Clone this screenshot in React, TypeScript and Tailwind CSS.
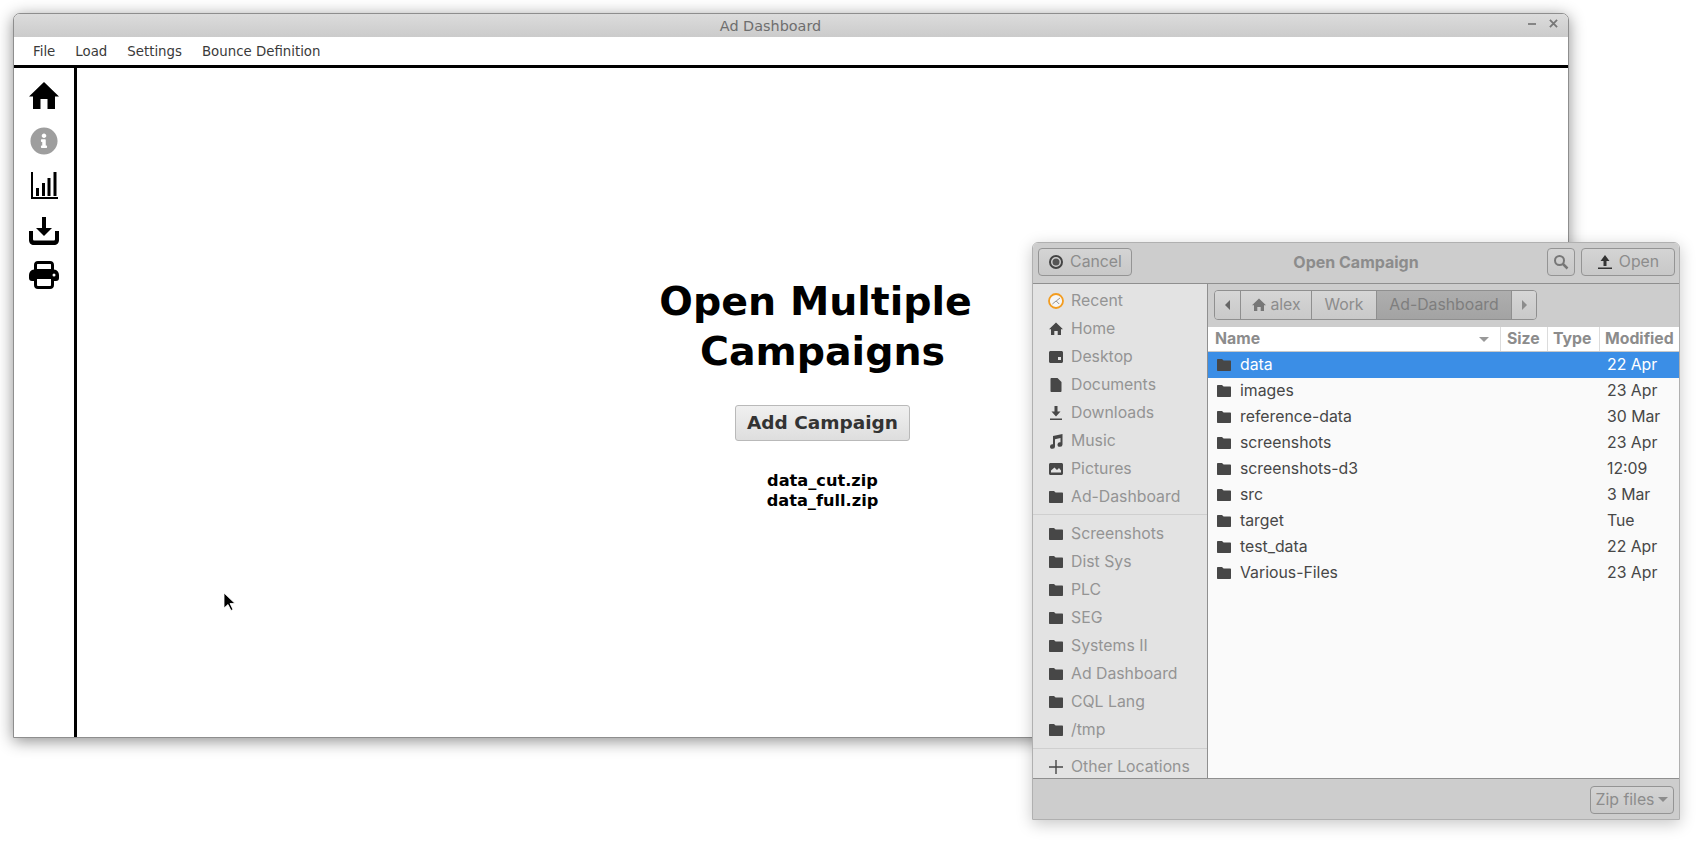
import type { ReactNode } from "react";
import { FaInfoCircle } from "react-icons/fa";

const DEJAVU = "font-['DejaVu_Sans',sans-serif]";
const INTER = "font-['Inter',sans-serif]";

const MENUS = ["File", "Load", "Settings", "Bounce Definition"];

const FOLDER = "M1 3C1 2.400 1.400 2 2 2H6l1.600 1.500H14c.6 0 1 .4 1 1V13c0 .6-.4 1-1 1H2c-.6 0-1-.4-1-1z";

function Folder({ className = "" }: { className?: string }) {
  return (
    <svg viewBox="0 0 16 16" className={"w-4 h-4 shrink-0 " + className} fill="#474747">
      <path d={FOLDER} />
    </svg>
  );
}

const PLACES: { label: string; icon: ReactNode }[] = [
  {
    label: "Recent",
    icon: (
      <svg viewBox="0 0 16 16" className="w-4 h-4 shrink-0">
        <circle cx="8" cy="8" r="7" fill="#f6f6f6" stroke="#f39c1f" strokeWidth="1.800" />
        <path d="M8.200 8L12 5M8 8l-3.600 3M8.200 8l3 3" stroke="#777" strokeWidth="0.800" fill="none" />
      </svg>
    ),
  },
  {
    label: "Home",
    icon: (
      <svg viewBox="0 0 16 16" className="w-4 h-4 shrink-0" fill="#474747">
        <path d="M8 1.500L15 8.300h-2V14H9.700v-4H6.300v4H3V8.300H1z" />
      </svg>
    ),
  },
  {
    label: "Desktop",
    icon: (
      <svg viewBox="0 0 16 16" className="w-4 h-4 shrink-0" fill="#474747">
        <path fillRule="evenodd" d="M1 3.500C1 2.700 1.700 2 2.500 2h11c.8 0 1.500.7 1.500 1.500v9c0 .8-.7 1.500-1.500 1.500h-11C1.700 14 1 13.300 1 12.500zM10 8v3h3V8z" />
      </svg>
    ),
  },
  {
    label: "Documents",
    icon: (
      <svg viewBox="0 0 16 16" className="w-4 h-4 shrink-0" fill="#474747">
        <path d="M2.500 2C2.500 1.400 3 1 3.500 1H9.500l4 4v9c0 .6-.5 1-1 1h-9c-.5 0-1-.4-1-1z" />
      </svg>
    ),
  },
  {
    label: "Downloads",
    icon: (
      <svg viewBox="0 0 16 16" className="w-4 h-4 shrink-0" fill="#474747">
        <path d="M6.500 1h3v5.500h3L8 11.500 3.500 6.500h3zM2 13.500h12V15H2z" />
      </svg>
    ),
  },
  {
    label: "Music",
    icon: (
      <svg viewBox="0 0 16 16" className="w-4 h-4 shrink-0" fill="#474747">
        <path d="M5 3l9.500-2v10.500a2.500 2.300 0 1 1-2-2.200V5L7 6.200v7.300A2.500 2.300 0 1 1 5 11.300z" />
      </svg>
    ),
  },
  {
    label: "Pictures",
    icon: (
      <svg viewBox="0 0 16 16" className="w-4 h-4 shrink-0" fill="#474747">
        <path fillRule="evenodd" d="M1 3.500C1 2.700 1.700 2 2.500 2h11c.8 0 1.500.7 1.500 1.500v9c0 .8-.7 1.500-1.500 1.500h-11C1.700 14 1 13.300 1 12.500zM3 11.500h10V9.500L11 7 9 9 6.500 6.500 3 9.500z" />
      </svg>
    ),
  },
  { label: "Ad-Dashboard", icon: <Folder /> },
];

const BOOKMARKS = ["Screenshots", "Dist Sys", "PLC", "SEG", "Systems II", "Ad Dashboard", "CQL Lang", "/tmp"];

const FILES: [string, string][] = [
  ["data", "22 Apr"],
  ["images", "23 Apr"],
  ["reference-data", "30 Mar"],
  ["screenshots", "23 Apr"],
  ["screenshots-d3", "12:09"],
  ["src", "3 Mar"],
  ["target", "Tue"],
  ["test_data", "22 Apr"],
  ["Various-Files", "23 Apr"],
];

function Place({ label, icon }: { label: string; icon: ReactNode }) {
  return (
    <div className="h-[28px] flex items-center pl-[15px] gap-[7px] text-[15.8px] text-[#949494]">
      {icon}
      <span>{label}</span>
    </div>
  );
}

function Sidebar() {
  return (
    <div className="w-[175px] shrink-0 bg-[#e3e3e3] border-r border-[#8f8f8f] pt-[3px] overflow-hidden">
      {PLACES.map((p) => (
        <Place key={p.label} label={p.label} icon={p.icon} />
      ))}
      <div className="h-px bg-[#cfcfcf] mt-[3px] mb-[5px]" />
      {BOOKMARKS.map((b) => (
        <Place key={b} label={b} icon={<Folder />} />
      ))}
      <div className="h-px bg-[#cfcfcf] mt-[4px] mb-[4px]" />
      <Place
        label="Other Locations"
        icon={
          <svg viewBox="0 0 16 16" className="w-4 h-4 shrink-0" fill="#474747">
            <path d="M7.300 1h1.400v6.300H15v1.400H8.700V15H7.300V8.700H1V7.300h6.300z" />
          </svg>
        }
      />
    </div>
  );
}

function PathBar() {
  const seg = "h-full flex items-center justify-center border-r border-[#8f8f8f] bg-gradient-to-b from-[#d6d6d6] to-[#c9c9c9]";
  return (
    <div className="h-[43px] shrink-0 bg-[#cdcdcd] pt-[6px] pl-[6px]">
      <div className="flex w-[323px] h-[30px] border border-[#8f8f8f] rounded-[4px] overflow-hidden text-[15.8px] text-[#8c8c8c]">
        <div className={seg + " w-[26px]"}>
          <span className="w-0 h-0 border-y-[5px] border-y-transparent border-r-[5px] border-r-[#666]" />
        </div>
        <div className={seg + " w-[71px] gap-[3px]"}>
          <svg viewBox="0 0 16 16" className="w-4 h-4" fill="#777">
            <path d="M8 1.500L15 8.300h-2V14H9.700v-4H6.300v4H3V8.300H1z" />
          </svg>
          alex
        </div>
        <div className={seg + " w-[65px]"}>Work</div>
        <div className="h-full w-[135px] flex items-center justify-center border-r border-[#8f8f8f] bg-gradient-to-b from-[#aeaeae] to-[#a3a3a3] text-[#7e7e7e]">
          Ad-Dashboard
        </div>
        <div className="h-full flex-1 flex items-center justify-center bg-gradient-to-b from-[#d6d6d6] to-[#c9c9c9]">
          <span className="w-0 h-0 border-y-[5px] border-y-transparent border-l-[5px] border-l-[#8c8c8c]" />
        </div>
      </div>
    </div>
  );
}

function FileList() {
  return (
    <div className="flex-1 min-w-0 flex flex-col">
      <PathBar />
      <div className="flex-1 bg-[#fafafa]">
        <div className="flex h-[25px] bg-white border-b border-[#c9c9c9] text-[15.8px] font-bold text-[#8c8c8c]">
          <div className="w-[293px] pl-[7px] pr-[11px] flex items-center justify-between border-r border-[#dcdcdc]">
            Name
            <span className="w-0 h-0 border-x-[5px] border-x-transparent border-t-[5px] border-t-[#999]" />
          </div>
          <div className="w-[47px] pl-[6px] flex items-center border-r border-[#dcdcdc]">Size</div>
          <div className="w-[52px] pl-[5px] flex items-center border-r border-[#dcdcdc]">Type</div>
          <div className="flex-1 pl-[5px] flex items-center whitespace-nowrap">Modified</div>
        </div>
        {FILES.map(([name, date], i) => (
          <div
            key={name}
            className={"h-[26px] flex items-center text-[15.8px] " + (i === 0 ? "bg-[#3b8ee6] text-white" : "text-[#474747]")}
          >
            <Folder className="ml-[8px] mr-[8px]" />
            <span className="w-[367px]">{name}</span>
            <span>{date}</span>
          </div>
        ))}
      </div>
    </div>
  );
}

function Dialog() {
  const btn = "h-[28px] flex items-center justify-center border border-[#949494] rounded-[4px] bg-gradient-to-b from-[#d4d4d4] to-[#c8c8c8]";
  return (
    <div className={"absolute left-[1032px] top-[242px] w-[648px] h-[578px] flex flex-col border-x border-b border-t border-[#b0b0b0] rounded-t-[6px] overflow-hidden shadow-[0_4px_16px_rgba(0,0,0,0.22)] " + INTER}>
      <div className="relative h-[41px] shrink-0 flex items-start justify-between pt-[5px] pl-[5px] pr-[4px] bg-[#cdcdcd] border-b border-[#8f8f8f]">
        <div className={btn + " w-[94px] gap-[6px] text-[15.8px] text-[#8c8c8c]"}>
          <svg viewBox="0 0 16 16" className="w-4 h-4">
            <circle cx="8" cy="8" r="6" fill="none" stroke="#444" strokeWidth="2" />
            <circle cx="8" cy="8" r="3.500" fill="#555" />
          </svg>
          Cancel
        </div>
        <span className="absolute inset-x-0 top-[7px] text-center text-[16px] font-bold text-[#8c8c8c] whitespace-nowrap">
          Open Campaign
        </span>
        <div className="relative flex gap-[6px]">
          <div className={btn + " w-[28px]"}>
            <svg viewBox="0 0 16 16" className="w-4 h-4" fill="none" stroke="#777" strokeWidth="2">
              <circle cx="6.500" cy="6.500" r="4.500" />
              <path d="M10 10l4.500 4.500" strokeWidth="2.500" />
            </svg>
          </div>
          <div className={btn + " w-[94px] gap-[6px] text-[15.8px] text-[#8c8c8c]"}>
            <svg viewBox="0 0 16 16" className="w-4 h-4" fill="#333">
              <path d="M8 1l4.500 6h-3v5h-3V7h-3zM1 13.500h14V15H1z" />
            </svg>
            Open
          </div>
        </div>
      </div>
      <div className="flex-1 min-h-0 flex">
        <Sidebar />
        <FileList />
      </div>
      <div className="h-[41px] shrink-0 bg-[#cdcdcd] border-t border-[#8f8f8f] flex items-center justify-end pr-[5px] pt-[1px]">
        <div className={btn + " w-[84px] gap-[4px] text-[15.8px] text-[#8c8c8c]"}>
          Zip files
          <span className="w-0 h-0 border-x-[5px] border-x-transparent border-t-[5px] border-t-[#8c8c8c]" />
        </div>
      </div>
    </div>
  );
}

function Rail() {
  return (
    <div className="w-[63px] shrink-0 border-r-[3px] border-black flex flex-col items-center pt-[14px]">
      <svg viewBox="0 0 30 27" className="w-[30px] h-[27px]" fill="#000">
        <path d="M15 0L30 14.500h-4V27h-7.500V17h-7v10H4V14.500H0z" />
      </svg>
      <FaInfoCircle className="mt-[18px] text-[28px] text-[#9e9e9e]" />
      <svg viewBox="0 0 27 27" className="mt-[17px] w-[27px] h-[27px]" fill="#000">
        <path d="M0 0h2v25h25v2H0zM5 16h3v8H5zM11 11h3v13h-3zM16.500 6h3v18h-3zM22.500 0h3v24h-3z" />
      </svg>
      <svg viewBox="0 0 30 28" className="mt-[18px] w-[30px] h-[28px]" fill="#000">
        <path d="M13 0h4v11h6l-8 8-8-8h6z" />
        <path d="M0 14h4v8c0 1 .5 1.500 1.500 1.500h19c1 0 1.500-.5 1.500-1.500v-8h4v9c0 3-2 5-5 5H5c-3 0-5-2-5-5z" />
      </svg>
      <svg viewBox="0 0 30 28" className="mt-[16px] w-[30px] h-[28px]" fill="#000">
        <path fillRule="evenodd" d="M5 4c0-2.500 1.500-4 4-4h12c2.500 0 4 1.500 4 4v4.500c3 .3 5 2.500 5 5.500v3c0 2-1 3-3 3h-2v4c0 2.500-1.500 4-4 4H9c-2.500 0-4-1.500-4-4v-4H3c-2 0-3-1-3-3v-3c0-3 2-5.200 5-5.500zM8 3.500V8h14V3.500c0-.3-.2-.5-.5-.5h-13c-.3 0-.5.2-.5.500zM8 18v6c0 .8.700 1 1 1h12c.5 0 1-.2 1-1v-6zM25 12.500a1.500 1.500 0 1 0 0 3 1.500 1.500 0 0 0 0-3z" />
      </svg>
    </div>
  );
}

function MainWindow() {
  return (
    <div className={"absolute left-[13px] top-[13px] w-[1556px] h-[725px] flex flex-col bg-white border-x border-b border-t border-[#8e8e8e] rounded-t-[7px] overflow-hidden shadow-[0_3px_16px_rgba(0,0,0,0.45)] " + DEJAVU}>
      <div className="relative h-[23px] shrink-0 flex items-center justify-center pr-[41px] pt-[3px] bg-gradient-to-b from-[#dcdcdc] to-[#cbcbcb] text-[14.4px] text-[#6e6e6e]">
        Ad Dashboard
        <div className="absolute right-[10px] top-[5px] flex items-center gap-[13px]">
          <span className="w-[8px] h-[2px] bg-[#858585]" />
          <svg viewBox="0 0 10 10" className="w-[9px] h-[9px]">
            <path d="M1 1l8 8M9 1l-8 8" stroke="#777" strokeWidth="2" />
          </svg>
        </div>
      </div>
      <div className="h-[31px] shrink-0 flex items-center pl-[9px] pt-[2px] bg-white border-b-[3px] border-black text-[13.33px] text-[#3a3a3a]">
        {MENUS.map((m) => (
          <span key={m} className="px-[10px]">{m}</span>
        ))}
      </div>
      <div className="flex-1 min-h-0 flex">
        <Rail />
        <div className="flex-1 flex flex-col items-center pt-[208px] text-black">
          <h1 className="text-[39.5px] leading-[50px] font-bold text-center whitespace-pre">
            {"Open Multiple \nCampaigns"}
          </h1>
          <button className="mt-[29px] w-[175px] h-[36px] border border-[#b9b9b9] rounded-[3px] bg-gradient-to-b from-[#f0f0f0] to-[#dedede] text-[18.500px] font-bold text-[#333]">
            Add Campaign
          </button>
          <div className="mt-[30px] text-[16.2px] leading-[20px] font-bold text-center">
            <div>data_cut.zip</div>
            <div>data_full.zip</div>
          </div>
        </div>
      </div>
    </div>
  );
}

export default function App() {
  return (
    <div className="relative w-[1699px] h-[843px] bg-white overflow-hidden">
      <MainWindow />
      <Dialog />
      {/* mouse pointer left in the capture */}
      <svg viewBox="0 0 14 20" className="absolute left-[223px] top-[592px] w-[14px] h-[20px]">
        <path d="M1 1v15l4-3.500 3 6 2-1-3-6h5z" fill="#000" stroke="#fff" strokeWidth="0.800" />
      </svg>
    </div>
  );
}
